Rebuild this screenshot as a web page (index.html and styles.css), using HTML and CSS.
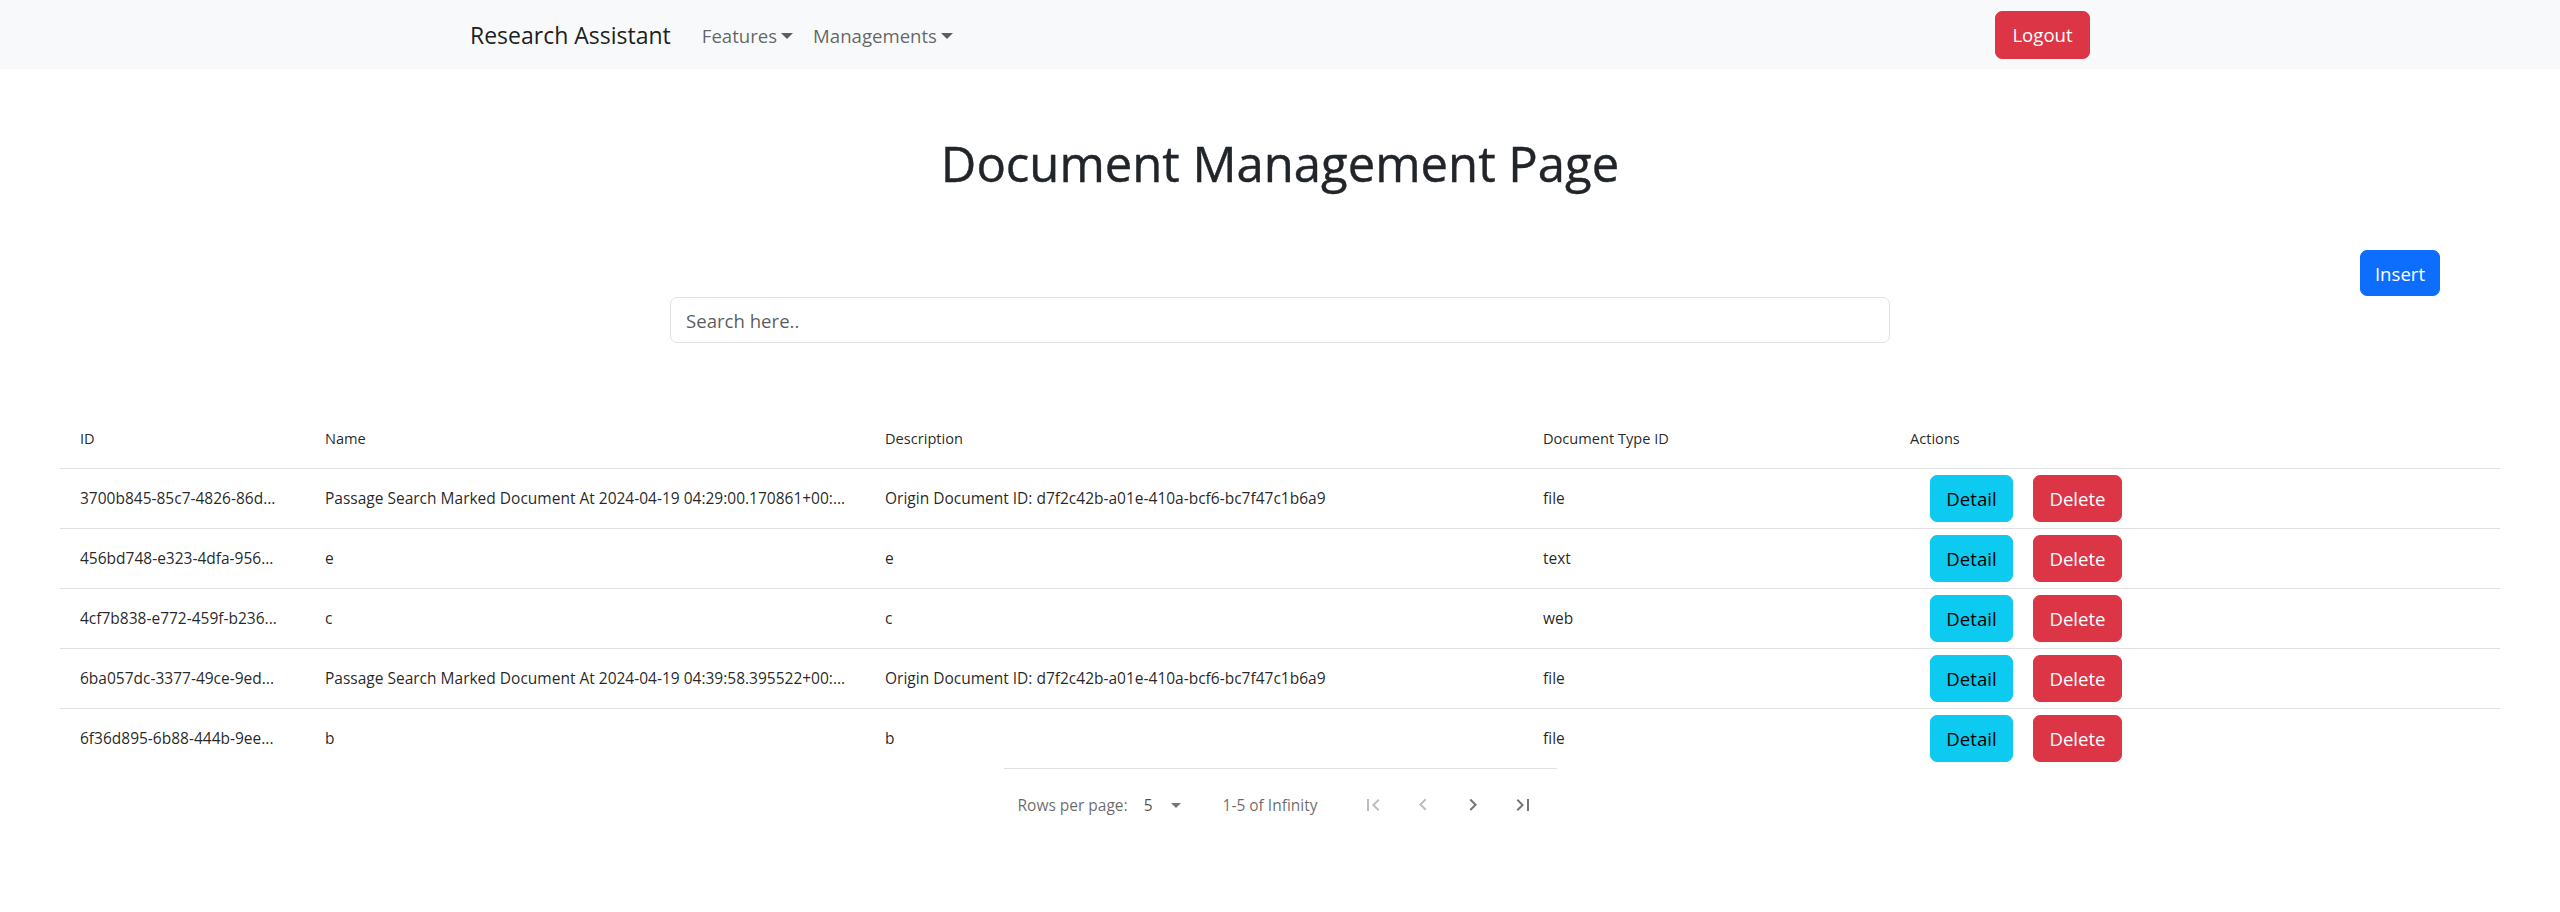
FILE: index.html
```html
<!DOCTYPE html>
<html lang="en">
<head>
<meta charset="utf-8">
<title>Document Management Page</title>
<link rel="stylesheet" href="styles.css">
</head>
<body>
<nav class="navbar">
  <div class="nav-inner">
    <div class="nav-left">
      <a class="brand" href="#">Research Assistant</a>
      <ul class="nav-links">
        <li class="nav-link dropdown-toggle">Features</li>
        <li class="nav-link dropdown-toggle">Managements</li>
      </ul>
    </div>
    <button class="btn btn-danger btn-logout">Logout</button>
  </div>
</nav>

<main class="page">
  <h1 class="page-title">Document Management Page</h1>

  <div class="toolbar">
    <button class="btn btn-primary btn-insert">Insert</button>
  </div>

  <div class="search-row">
    <input class="search" type="text" placeholder="Search here..">
  </div>

  <div class="table-wrap">
    <table class="doc-table">
      <colgroup>
        <col class="c-id">
        <col class="c-name">
        <col class="c-desc">
        <col class="c-type">
        <col class="c-actions">
      </colgroup>
      <thead>
        <tr>
          <th>ID</th>
          <th>Name</th>
          <th>Description</th>
          <th>Document Type ID</th>
          <th>Actions</th>
        </tr>
      </thead>
      <tbody>
        <tr>
          <td>3700b845-85c7-4826-86d...</td>
          <td>Passage Search Marked Document At 2024-04-19 04:29:00.170861+00:...</td>
          <td>Origin Document ID: d7f2c42b-a01e-410a-bcf6-bc7f47c1b6a9</td>
          <td>file</td>
          <td><div class="actions"><button class="btn btn-info btn-detail">Detail</button><button class="btn btn-danger btn-delete">Delete</button></div></td>
        </tr>
        <tr>
          <td>456bd748-e323-4dfa-956...</td>
          <td>e</td>
          <td>e</td>
          <td>text</td>
          <td><div class="actions"><button class="btn btn-info btn-detail">Detail</button><button class="btn btn-danger btn-delete">Delete</button></div></td>
        </tr>
        <tr>
          <td>4cf7b838-e772-459f-b236...</td>
          <td>c</td>
          <td>c</td>
          <td>web</td>
          <td><div class="actions"><button class="btn btn-info btn-detail">Detail</button><button class="btn btn-danger btn-delete">Delete</button></div></td>
        </tr>
        <tr>
          <td>6ba057dc-3377-49ce-9ed...</td>
          <td>Passage Search Marked Document At 2024-04-19 04:39:58.395522+00:...</td>
          <td>Origin Document ID: d7f2c42b-a01e-410a-bcf6-bc7f47c1b6a9</td>
          <td>file</td>
          <td><div class="actions"><button class="btn btn-info btn-detail">Detail</button><button class="btn btn-danger btn-delete">Delete</button></div></td>
        </tr>
        <tr>
          <td>6f36d895-6b88-444b-9ee...</td>
          <td>b</td>
          <td>b</td>
          <td>file</td>
          <td><div class="actions"><button class="btn btn-info btn-detail">Detail</button><button class="btn btn-danger btn-delete">Delete</button></div></td>
        </tr>
      </tbody>
    </table>

    <div class="pagination">
      <span class="pg-label">Rows per page:</span>
      <div class="pg-select">
        <span class="pg-value">5</span>
        <svg class="pg-drop" viewBox="0 0 24 24" width="24" height="24"><path d="M7 10l5 5 5-5z"/></svg>
      </div>
      <span class="pg-range">1-5 of Infinity</span>
      <div class="pg-actions">
        <span class="pg-btn disabled"><svg viewBox="0 0 24 24" width="24" height="24"><path d="M18.41 16.59L13.82 12l4.59-4.59L17 6l-6 6 6 6zM6 6h2v12H6z"/></svg></span>
        <span class="pg-btn disabled"><svg viewBox="0 0 24 24" width="24" height="24"><path d="M15.41 16.09l-4.59-4.59 4.59-4.59L14 5.5l-6 6 6 6z"/></svg></span>
        <span class="pg-btn"><svg viewBox="0 0 24 24" width="24" height="24"><path d="M8.59 16.34l4.59-4.59-4.59-4.59L10 5.75l6 6-6 6z"/></svg></span>
        <span class="pg-btn"><svg viewBox="0 0 24 24" width="24" height="24"><path d="M5.59 7.41L10.18 12l-4.59 4.59L7 18l6-6-6-6zM16 6h2v12h-2z"/></svg></span>
      </div>
    </div>
  </div>
</main>
</body>
</html>
```

FILE: styles.css
```css
* { box-sizing: border-box; }

body {
  margin: 0;
  font-family: "Open Sans", "Noto Sans", sans-serif;
  color: #212529;
  background: #fff;
}

/* ---------- navbar ---------- */
.navbar {
  background: #f8f9fa;
  height: 69px;
  display: flex;
  align-items: center;
}
.nav-inner {
  width: 1620px;
  margin: 0 auto;
  display: flex;
  align-items: center;
  justify-content: space-between;
}
.nav-left {
  display: flex;
  align-items: center;
}
.brand {
  font-size: 23px;
  color: rgba(0, 0, 0, 0.9);
  text-decoration: none;
  margin-right: 21px;
  line-height: 36px;
}
.nav-links {
  list-style: none;
  margin: 0;
  padding: 2px 0 0;
  display: flex;
}
.nav-link {
  font-size: 18.6px;
  color: rgba(0, 0, 0, 0.62);
  padding: 0 10px;
  line-height: 29px;
}
.dropdown-toggle::after {
  content: "";
  display: inline-block;
  margin-left: 4px;
  vertical-align: 4px;
  border-top: 6px solid;
  border-right: 6px solid transparent;
  border-left: 6px solid transparent;
  border-bottom: 0;
}

/* ---------- buttons ---------- */
.btn {
  font-family: inherit;
  font-size: 18.6px;
  line-height: 29px;
  height: 47px;
  padding: 0;
  border: 1px solid transparent;
  border-radius: 7px;
  text-align: center;
  cursor: pointer;
}
.btn-danger { background: #dc3545; border-color: #dc3545; color: #fff; }
.btn-primary { background: #0d6efd; border-color: #0d6efd; color: #fff; }
.btn-info { background: #0dcaf0; border-color: #0dcaf0; color: #000; }

.btn-logout { width: 95px; height: 48px; }
.btn-insert { width: 80px; height: 46px; }
.btn-detail { width: 83px; }
.btn-delete { width: 89px; }

/* ---------- page ---------- */
.page-title {
  margin: 64px 0 0;
  text-align: center;
  font-size: 49px;
  font-weight: 500;
  line-height: 60px;
  color: #212529;
  -webkit-text-stroke: 0.4px #212529;
}
.toolbar {
  display: flex;
  justify-content: flex-end;
  padding-right: 120px;
  margin-top: 57px;
}
.search-row {
  display: flex;
  justify-content: center;
  margin-top: 1px;
}
.search {
  width: 1220px;
  height: 46px;
  border: 1px solid #dee2e6;
  border-radius: 7px;
  padding: 0 15px;
  font-family: inherit;
  font-size: 18.6px;
  color: #212529;
  outline: none;
}
.search::placeholder { color: rgba(33, 37, 41, 0.75); }

/* ---------- table ---------- */
.table-wrap {
  margin: 65px 60px 0;
}
.doc-table {
  width: 100%;
  border-collapse: collapse;
  table-layout: fixed;
  font-size: 15.5px;
  color: rgba(0, 0, 0, 0.87);
}
.c-id { width: 245px; }
.c-name { width: 560px; }
.c-desc { width: 658px; }
.c-type { width: 367px; }
.c-actions { width: 610px; }

.doc-table th,
.doc-table td {
  height: 60px;
  padding: 0 20px;
  text-align: left;
  vertical-align: middle;
  border-bottom: 1px solid #e0e0e0;
  white-space: nowrap;
  overflow: hidden;
}
.doc-table th { font-weight: 500; font-size: 14.6px; }
.doc-table tbody tr:last-child td { border-bottom: 0; }

.actions {
  display: flex;
  gap: 20px;
  margin-left: 20px;
}

/* ---------- pagination ---------- */
.pagination {
  width: 553px;
  height: 72px;
  margin: 0 auto;
  border-top: 1px solid #e0e0e0;
  display: flex;
  align-items: center;
  padding: 0 14px;
  font-size: 15.5px;
  color: rgba(0, 0, 0, 0.6);
}
.pg-select {
  display: flex;
  align-items: center;
  margin-left: 16px;
}
.pg-value { color: rgba(0, 0, 0, 0.7); }
.pg-drop {
  margin-left: 11px;
  fill: rgba(0, 0, 0, 0.54);
}
.pg-range { margin-left: 35px; }
.pg-actions {
  display: flex;
  gap: 10px;
  margin-left: auto;
}
.pg-btn {
  width: 40px;
  height: 40px;
  display: flex;
  align-items: center;
  justify-content: center;
  fill: rgba(0, 0, 0, 0.54);
}
.pg-btn.disabled { fill: rgba(0, 0, 0, 0.26); }
```
